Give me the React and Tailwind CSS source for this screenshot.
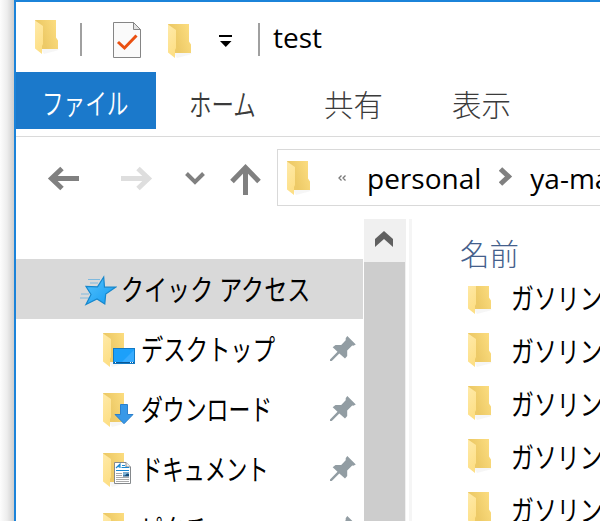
const jp = "font-['Noto_Sans_CJK_JP',sans-serif]";
const latin = "font-['Open_Sans',sans-serif]";

function Folder({ children, className = '', clipped = false }) {
  return (
    <svg width="34" height="36" viewBox="0 0 34 36" className={`shrink-0 ${className}`}>
      <defs>
        <linearGradient id="back" x1="0" y1="0.6" x2="1" y2="0.2">
          <stop offset="0.3" stopColor="#edca67" />
          <stop offset="1" stopColor="#fcdd80" />
        </linearGradient>
        <linearGradient id="front" x1="0" y1="0" x2="0.3" y2="1">
          <stop offset="0" stopColor="#ffeaa9" />
          <stop offset="1" stopColor="#fddf86" />
        </linearGradient>
      </defs>
      <path d="M6 29H24L22 30.5L9 34Z" fill="#eee" opacity=".5" />
      <path d="M0 0H21V17.5L23 20.5V29H5Z" fill="url(#back)" />
      <path d="M0 .5L8 6V24L7 26V34L0 28.5Z" fill="url(#front)" />
      {clipped && <path d="M0 0H34V6H0Z" fill="#fff" />}
      {children}
    </svg>
  );
}

function Pin() {
  return (
    <svg width="26" height="26" viewBox="0 0 26 26" className="shrink-0">
      <path d="M17.3 0L25.8 8.4L23.3 9.8L22.2 9.6L17.2 14.5V20L15 22.6L9.3 17.4L1.8 25H0V23.4L7.5 15.8L2.7 11.2L5.5 9H11.2L15.7 4.3V2.2Z" fill="#929da3" />
    </svg>
  );
}

function TreeRow({ label, art, scale }) {
  return (
    <div className="flex h-[60px] shrink-0 items-start pl-[87px]">
      <Folder className="mt-[14px]">{art}</Folder>
      <span className={`ml-[4px] w-[187px] origin-left whitespace-nowrap text-[29px] leading-[59px] text-black ${scale} ${jp}`}>{label}</span>
      <span className="ml-[2px] mt-[17px]"><Pin /></span>
    </div>
  );
}

const desktopArt = (
  <>
    <rect x="10.5" y="15.5" width="21" height="15" fill="#1ca0fa" stroke="#1279c4" />
    <path d="M18 30L31 17V30Z" fill="#38acff" />
    <path d="M11 29.5H31" stroke="#095795" />
    <path d="M12 29.5H13M27 29.5H28M29 29.5H30" stroke="#fff" />
  </>
);
const downloadArt = <path d="M17.5 11.5H24.5V21.5H30L21 30.7L12 21.5H17.5Z" fill="#3798e8" stroke="#2b80cc" />;
const documentArt = (
  <>
    <path d="M11.5 9.5H23L27.5 14V30.5H11.5Z" fill="#fff" stroke="#85898c" />
    <path d="M23 9.5V14H27.5" fill="#eee" stroke="#85898c" />
    <path d="M13 15L17 11V15M14.5 13.7H17M19 12.5H22M18.5 14.5H26M13 17.5H26" stroke="#1887d2" strokeWidth="1.1" fill="none" />
    <path d="M13 20.5H19M13 22.5H19M13 24.5H26M13 26.5H26M13 28.5H26" stroke="#aaa" />
    <rect x="20" y="19.5" width="6" height="4" fill="#174c78" />
    <path d="M20 19.5H26V21L24 20.5L22 22.5H20Z" fill="#7fb4d8" />
  </>
);

function TitleBar() {
  return (
    <div className="flex h-[70px] items-start pl-[19px]">
      <Folder className="mt-[18px]" />
      <span className="ml-[11px] mt-[21px] h-[33px] w-[2px] bg-[#a0a0a0]" />
      <svg width="28" height="36" viewBox="0 0 28 36" className="ml-[31px] mt-[20px] shrink-0">
        <path d="M.5 .5H20.5L27.5 7.5V35.5H.5Z" fill="#fafafa" stroke="#858585" />
        <path d="M20.5 .5V7.5H27.5Z" fill="#e2e2e2" stroke="#858585" />
        <path d="M5 20L11.5 26L23.5 13.5" fill="none" stroke="#ea5011" strokeWidth="3" />
      </svg>
      <Folder className="ml-[27px] mt-[22px]" />
      <svg width="14" height="14" viewBox="0 0 14 14" className="ml-[17px] mt-[31px] shrink-0">
        <path d="M0 2H13V4H0ZM1 8H12.5L6.8 14Z" fill="#000" />
      </svg>
      <span className="ml-[25px] mt-[21px] h-[33px] w-[2px] bg-[#a0a0a0]" />
      <span className={`ml-[13px] mt-[15px] origin-left text-[28px] leading-[40px] text-black ${latin}`}>test</span>
    </div>
  );
}

function Tabs() {
  return (
    <div className="flex h-[65px] items-start border-b border-[#dadada] text-[29px] leading-[63px] text-[#3b3b3b]">
      <div className="h-[57px] w-[140px] bg-[#1b79cb] pl-[26px] text-white">
        <span className={`inline-block origin-left scale-x-[.745] whitespace-nowrap font-[350] leading-[58px] ${jp}`}>ファイル</span>
      </div>
      <span className={`ml-[33px] w-[87px] origin-left scale-x-[.775] font-[350] ${jp}`}>ホーム</span>
      <span className={`ml-[48px] w-[60px] whitespace-nowrap text-[29.5px] font-light ${jp}`}>共有</span>
      <span className={`ml-[68px] whitespace-nowrap text-[29.5px] font-light ${jp}`}>表示</span>
    </div>
  );
}

function NavBar() {
  return (
    <div className="flex h-[82px] items-start pt-[12px]">
      <svg width="230" height="57" viewBox="0 0 230 57" className="ml-[31px] shrink-0" fill="none">
        <path d="M32 29.5H6M15 19.5L4.500 29.5L15 39.500" stroke="#808080" strokeWidth="5" />
        <path d="M74 29.5H100M91 19.5L101.500 29.5L91 39.500" stroke="#dedede" strokeWidth="5" />
        <path d="M139.5 24.5L148 33L156.500 24.500" stroke="#808080" strokeWidth="4" />
        <path d="M198.500 46V18M185 32.500L198.500 18.500L212 32.500" stroke="#808080" strokeWidth="5" />
      </svg>
      <div className="flex h-[57px] flex-1 items-start overflow-hidden border border-r-0 border-[#d9d9d9]">
        <Folder className="ml-[9px] mt-[11px]" />
        <svg width="9" height="6" viewBox="0 0 9 6" className="ml-[17px] mt-[25px] shrink-0" fill="none" stroke="#777" strokeWidth="1.300">
          <path d="M3.500 .5L1 3L3.500 5.500M7.500 .5L5 3L7.500 5.500" />
        </svg>
        <span className={`ml-[20px] mt-[8px] w-[115px] origin-left text-[28px] leading-[40px] text-black ${latin}`}>personal</span>
        <svg width="14" height="20" viewBox="0 0 14 20" className="ml-[18px] mt-[17px] shrink-0" fill="none">
          <path d="M1.500 2L9.500 9.500L1.500 17" stroke="#808080" strokeWidth="5" />
        </svg>
        <span className={`ml-[17px] mt-[8px] origin-left whitespace-nowrap text-[28px] leading-[40px] text-black ${latin}`}>ya-ma</span>
      </div>
    </div>
  );
}

function Tree() {
  return (
    <div className="flex w-[347px] shrink-0 flex-col pt-[40px]">
      <div className="flex h-[60px] shrink-0 items-start bg-[#d9d9d9] pl-[64px]">
        <svg width="37" height="32" viewBox="0 0 37 32" className="mt-[15px] shrink-0">
          <defs>
            <linearGradient id="star" x1="0" y1="0" x2="1" y2="1">
              <stop offset="0" stopColor="#56c2fc" />
              <stop offset="1" stopColor="#129bf2" />
            </linearGradient>
          </defs>
          <path d="M8 5.500H20M10 9H18M1 20H9M0 24H9" stroke="#7eb9de" />
          <path d="M23.700 3L24.500 13.200L35.500 13.200L25.700 20L24.800 30L17 25L6 30.500L11 20.500L6 12.500L17.500 12.800Z" fill="url(#star)" stroke="#1687cc" strokeWidth="1.200" />
        </svg>
        <span className={`ml-[4px] origin-left scale-x-[.795] whitespace-nowrap text-[29px] leading-[59px] text-black [word-spacing:1px] ${jp}`}>クイック アクセス</span>
      </div>
      <TreeRow label="デスクトップ" art={desktopArt} scale="scale-x-[.77]" />
      <TreeRow label="ダウンロード" art={downloadArt} scale="scale-x-[.754]" />
      <TreeRow label="ドキュメント" art={documentArt} scale="scale-x-[.733]" />
      <TreeRow label="ピクチャ" scale="scale-x-[.76]" />
    </div>
  );
}

function FileList() {
  return (
    <div className="flex flex-1 flex-col overflow-hidden">
      <span className={`ml-[48px] h-[61px] text-[29.5px] font-light leading-[67px] text-[#44608c] ${jp}`}>名前</span>
      {[0, 1, 2, 3, 4].map((i) => (
        <div key={i} className="flex h-[53px] shrink-0 items-start pl-[56px]">
          <Folder clipped={i === 0} />
          <span className={`ml-[9px] origin-left scale-x-[.79] whitespace-nowrap text-[29px] leading-[35px] text-black ${jp}`}>ガソリン</span>
        </div>
      ))}
    </div>
  );
}

export default function App() {
  return (
    <div className="flex h-[521px] w-[600px] overflow-hidden bg-white">
      <div className="w-[14px] shrink-0 bg-linear-to-r from-[#fdfdfd] via-[#ededed] to-[#cecece]" />
      <div className="flex min-w-0 flex-1 flex-col border-l-2 border-t-2 border-[#1b83d9]">
        <TitleBar />
        <Tabs />
        <NavBar />
        <div className="flex min-h-0 flex-1 overflow-hidden">
          <Tree />
          <div className="ml-px flex w-[42px] shrink-0 flex-col bg-[#f0f0f0]">
            <svg width="42" height="43" viewBox="0 0 42 43" className="shrink-0">
              <path d="M11 20L20 12L29 20V28L20 20L11 28Z" fill="#606060" />
            </svg>
            <div className="w-[41px] flex-1 bg-[#cdcdcd]" />
          </div>
          <div className="ml-[3px] w-[3px] shrink-0 bg-[#f5f5f5]" />
          <FileList />
        </div>
      </div>
    </div>
  );
}
